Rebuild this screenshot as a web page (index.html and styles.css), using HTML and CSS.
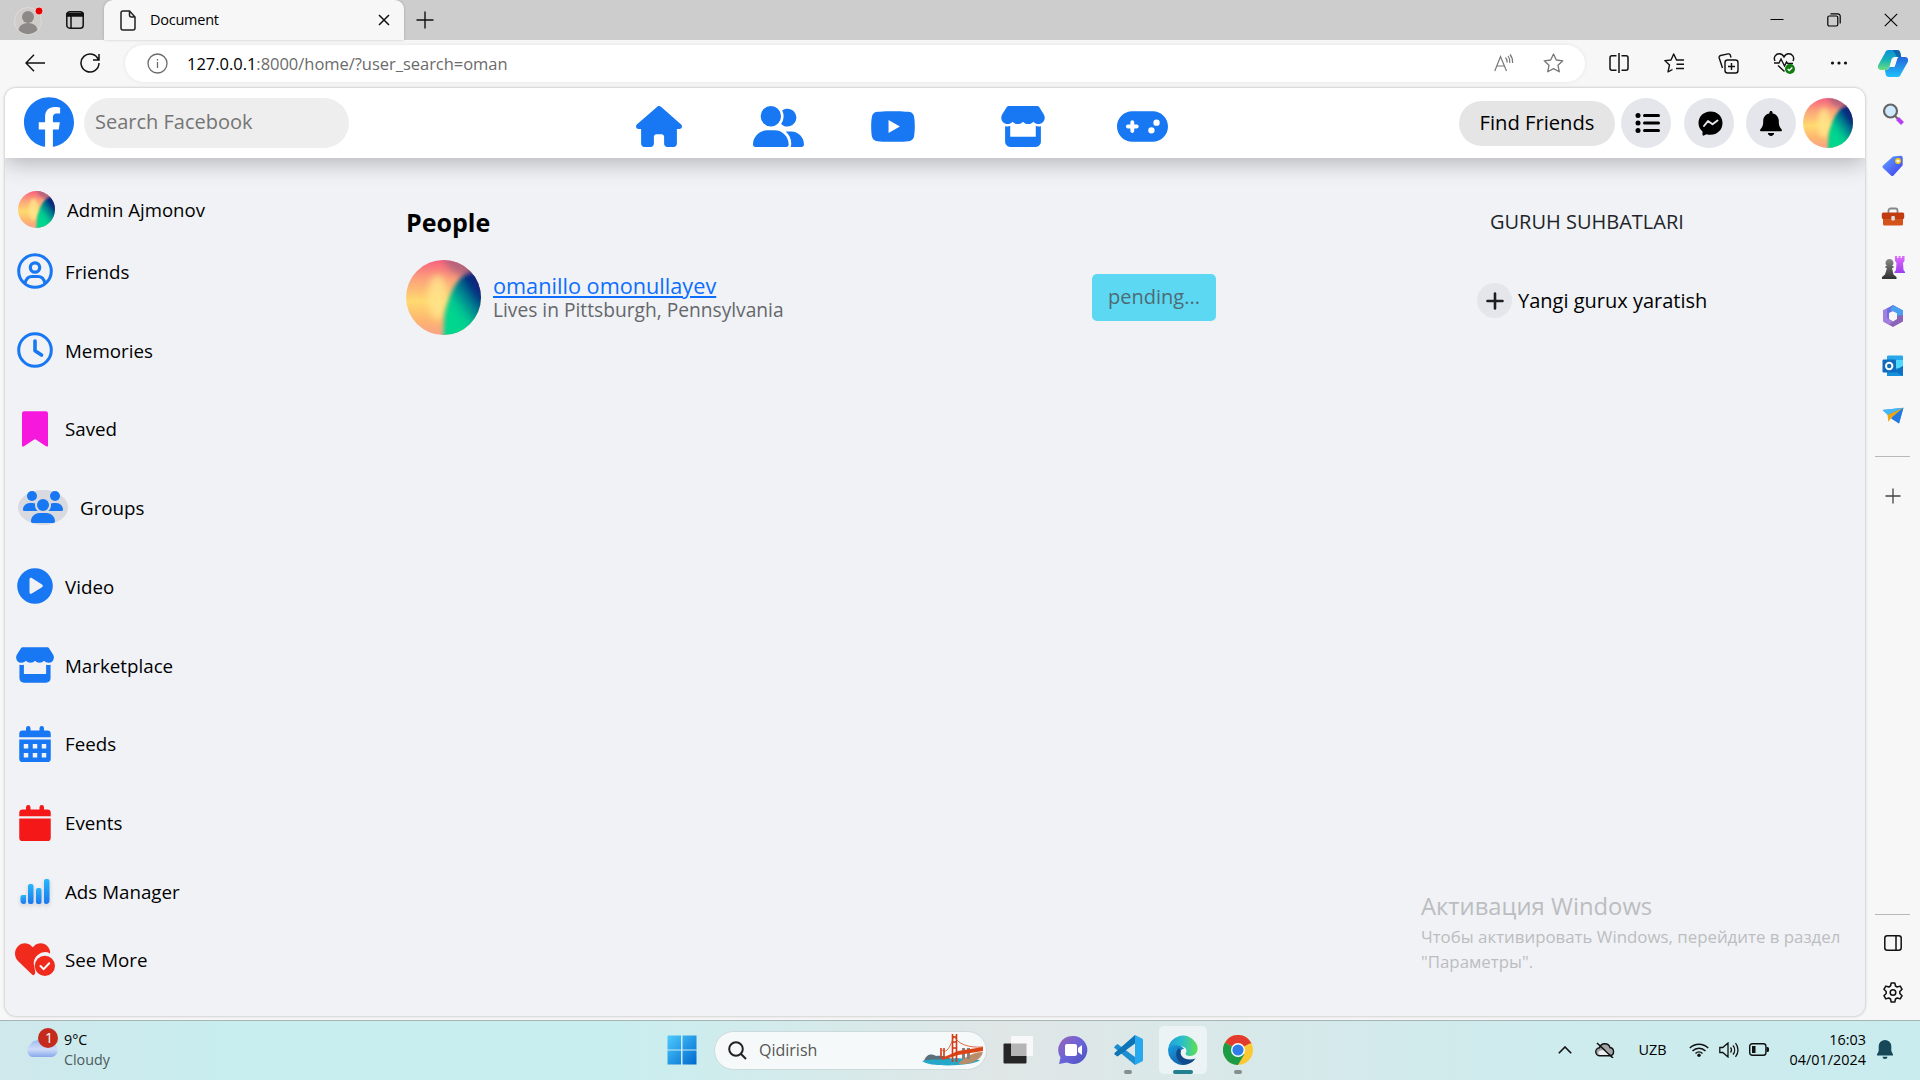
FILE: index.html
```html
<!DOCTYPE html>
<html lang="uz">
<head>
<meta charset="utf-8">
<title>Document</title>
<link rel="stylesheet" href="styles.css">
</head>
<body>
<svg class="defs" aria-hidden="true">
  <defs>
    <linearGradient id="warm" x1="0" y1="0" x2="0" y2="1"><stop offset="0" stop-color="#f8617f"/><stop offset=".25" stop-color="#fba17a"/><stop offset=".55" stop-color="#ffda70"/><stop offset=".8" stop-color="#fdb670"/><stop offset="1" stop-color="#f9a286"/></linearGradient>
    <linearGradient id="green" gradientUnits="userSpaceOnUse" x1="60" y1="70" x2="98" y2="42"><stop offset="0" stop-color="#00d68e"/><stop offset=".25" stop-color="#00c690"/><stop offset=".6" stop-color="#037f90"/><stop offset="1" stop-color="#06267e"/></linearGradient>
    <linearGradient id="bars" x1="0" y1="0" x2="0" y2="1"><stop offset="0" stop-color="#27b6fb"/><stop offset="1" stop-color="#1877f2"/></linearGradient>
    <linearGradient id="win" x1="0" y1="0" x2="1" y2="1"><stop offset="0" stop-color="#4ccbfd"/><stop offset="1" stop-color="#0068cf"/></linearGradient>
    <linearGradient id="edgeTop" x1="0" y1="0" x2="1" y2="0"><stop offset="0" stop-color="#1ba0de"/><stop offset=".5" stop-color="#2bc0c8"/><stop offset="1" stop-color="#62df4e"/></linearGradient>
    <linearGradient id="edgeLow" x1="0" y1="0" x2="1" y2="1"><stop offset="0" stop-color="#1b9de2"/><stop offset="1" stop-color="#0c4a92"/></linearGradient>
    <linearGradient id="chat" x1="0" y1="0" x2="1" y2="1"><stop offset="0" stop-color="#9a63b8"/><stop offset=".5" stop-color="#6a64d8"/><stop offset="1" stop-color="#4b50c0"/></linearGradient>
    <linearGradient id="copA" x1="0" y1="0" x2="0" y2="1"><stop offset="0" stop-color="#0c8fd8"/><stop offset=".5" stop-color="#16b3b8"/><stop offset="1" stop-color="#6ddf7c"/></linearGradient>
    <linearGradient id="copB" x1="0" y1="0" x2="0" y2="1"><stop offset="0" stop-color="#2464dc"/><stop offset="1" stop-color="#1fc0fa"/></linearGradient>
    <linearGradient id="violet" x1="0" y1="0" x2="0" y2="1"><stop offset="0" stop-color="#e36cff"/><stop offset="1" stop-color="#9a3cf0"/></linearGradient>
    <linearGradient id="grey" x1="0" y1="0" x2="0" y2="1"><stop offset="0" stop-color="#8a8a8a"/><stop offset="1" stop-color="#303030"/></linearGradient>
    <linearGradient id="tag" x1="0" y1="0" x2="1" y2="1"><stop offset="0" stop-color="#62a8ff"/><stop offset="1" stop-color="#4038f0"/></linearGradient>
    <linearGradient id="cloud" x1="0" y1="0" x2="0" y2="1"><stop offset="0" stop-color="#8fb0ec"/><stop offset=".6" stop-color="#cfdcfa"/><stop offset="1" stop-color="#86a8ea"/></linearGradient>
    <filter id="soft" x="-30%" y="-30%" width="160%" height="160%"><feGaussianBlur stdDeviation="5"/></filter>
    <filter id="edge" x="-30%" y="-30%" width="160%" height="160%"><feGaussianBlur stdDeviation="2.800"/></filter>
    <clipPath id="round"><circle cx="50" cy="50" r="50"/></clipPath>
    <symbol id="avatar" viewBox="0 0 100 100">
      <g clip-path="url(#round)">
        <rect width="100" height="100" fill="url(#warm)"/>
        <ellipse cx="42" cy="50" rx="13" ry="30" fill="#ffe58c" opacity=".8" filter="url(#soft)"/>
        <path d="M46-10 110-10 110 40 74 22 58 12z" fill="#a0607c" opacity=".75" filter="url(#soft)"/>
        <path d="M78 20C68 26 60 42 56 56C51 68 50 82 50 110L115 110 115 10z" fill="url(#green)" filter="url(#edge)"/>
        <path d="M84 10 120 20 120 55 94 44z" fill="#1e2c7e" opacity=".8" filter="url(#soft)"/>
      </g>
    </symbol>
    <symbol id="store" viewBox="0 0 576 512"><path d="M547.6 103.8L490.3 13.1C485.2 5 476.1 0 466.4 0H109.6C99.9 0 90.8 5 85.7 13.1L28.3 103.8c-29.6 46.8-3.4 111.9 51.9 119.4c4 .5 8.1 .8 12.1 .8c26.1 0 49.3-11.4 65.2-29c15.9 17.6 39.1 29 65.2 29c26.1 0 49.3-11.4 65.2-29c15.9 17.6 39.1 29 65.2 29c26.2 0 49.3-11.4 65.2-29c16 17.6 39.1 29 65.2 29c4.1 0 8.1-.3 12.1-.8c55.5-7.4 81.8-72.5 52.1-119.4zM499.7 254.9l-.1 0c-5.3 .7-10.7 1.1-16.2 1.1c-12.4 0-24.3-1.9-35.4-5.3V384H128V250.6c-11.2 3.5-23.2 5.4-35.6 5.4c-5.5 0-11-.4-16.3-1.1l-.1 0c-4.1-.6-8.1-1.3-12-2.3V384v64c0 35.3 28.7 64 64 64H448c35.3 0 64-28.7 64-64V384 252.6c-4 1-8 1.8-12.3 2.3z"/></symbol>
    <symbol id="bell" viewBox="0 0 448 512"><path d="M224 0c-17.7 0-32 14.3-32 32V49.9C119.5 61.4 64 124.2 64 200v33.4c0 45.4-15.5 89.5-43.8 124.9L5.3 377c-5.8 7.2-6.9 17.1-2.9 25.4S14.8 416 24 416H424c9.2 0 17.6-5.3 21.6-13.6s2.9-18.2-2.9-25.4l-14.9-18.6C399.5 322.9 384 278.8 384 233.4V200c0-75.8-55.5-138.6-128-150.1V32c0-17.7-14.3-32-32-32zM288 448H160c0 17 6.7 33.3 18.7 45.3s28.3 18.7 45.3 18.7s33.3-6.7 45.3-18.7s18.7-28.3 18.7-45.3z"/></symbol>
  </defs>
</svg>

<header class="tabbar">
  <svg class="profile" width="30" height="30" viewBox="0 0 30 30"><circle cx="14" cy="16" r="13.500" fill="#cfcdca" stroke="#dedcda"/><circle cx="14" cy="12" r="6" fill="#8c8986"/><path d="M4.500 25a9.500 7 0 0 1 19 0a13 13 0 0 1-19 0z" fill="#8c8986"/><circle cx="25" cy="6" r="4" fill="#e60000" stroke="#eee" stroke-width=".8"/></svg>
  <svg class="workspace" width="20" height="20" viewBox="0 0 20 20" fill="none" stroke="#111" stroke-width="1.500"><rect x="1.800" y="1.800" width="16.400" height="16.400" rx="3"/><path d="M2 3.500h16v2.500H2z" fill="#111"/><path d="M6 6v12"/></svg>
  <div class="tab">
    <svg width="16" height="21" viewBox="0 0 16 21" fill="none" stroke="#222" stroke-width="1.500"><path d="M1 3a2 2 0 0 1 2-2h6.500L15 7v11a2 2 0 0 1-2 2H3a2 2 0 0 1-2-2zM9.500 1v4a2 2 0 0 0 2 2H15"/></svg>
    <span class="tab-title">Document</span>
    <svg width="12" height="12" viewBox="0 0 12 12" stroke="#111" stroke-width="1.500"><path d="M1 1l10 10M11 1L1 11"/></svg>
  </div>
  <svg class="newtab" width="18" height="18" viewBox="0 0 18 18" stroke="#111" stroke-width="1.400"><path d="M9 .5v17M.5 9h17"/></svg>
  <div class="winctl">
    <svg width="14" height="14" viewBox="0 0 14 14" stroke="#000"><path d="M.5 6.500h13"/></svg>
    <svg width="14" height="14" viewBox="0 0 14 14" fill="none" stroke="#000" stroke-width="1.200"><rect x=".8" y="3" width="10" height="10" rx="1.500"/><path d="M3.500.8h7.200a2.500 2.500 0 0 1 2.500 2.500v7.200"/></svg>
    <svg width="14" height="14" viewBox="0 0 14 14" stroke="#000" stroke-width="1.100"><path d="M.8.8l12.400 12.400M13.200.8L.8 13.200"/></svg>
  </div>
</header>

<div class="toolbar">
  <svg class="back" width="20" height="18" viewBox="0 0 20 18" fill="none" stroke="#111" stroke-width="1.400"><path d="M9 .8L1 9l8 8.200M1 9h19"/></svg>
  <svg class="reload" width="20" height="20" viewBox="0 0 20 20" fill="none" stroke="#111" stroke-width="1.500"><path d="M18.500 7A9 9 0 1 0 19 10M19 1v6h-6"/></svg>
  <div class="address">
    <svg width="21" height="21" viewBox="0 0 21 21" fill="none" stroke="#6b6b6b" stroke-width="1.300"><circle cx="10.500" cy="10.500" r="9.500"/><path d="M10.500 9v6M10.500 6v1.600"/></svg>
    <span class="url"><b>127.0.0.1</b>:8000/home/?user_search=oman</span>
    <svg class="read" width="20" height="18" viewBox="0 0 20 18" fill="none" stroke="#777" stroke-width="1.200"><path d="M.8 17L6.500 2.500 12.500 17M2.800 12h7.600M11.500 3.500a6 6 0 0 1 1.500 5M14 2a9 9 0 0 1 1.800 7M16 .5a12 12 0 0 1 2.600 8.500"/></svg>
    <svg class="star" width="21" height="20" viewBox="0 0 21 20" fill="none" stroke="#777" stroke-width="1.300" stroke-linejoin="round"><path d="M10.500 1l2.800 6 6.500.8-4.800 4.500 1.300 6.500-5.800-3.200-5.800 3.200L6 12.300 1.200 7.800l6.500-.8z"/></svg>
  </div>
  <div class="tools">
    <svg width="20" height="20" viewBox="0 0 20 20" fill="none" stroke="#111" stroke-width="1.500"><path d="M7.500 2.800H3a2 2 0 0 0-2 2v10.500a2 2 0 0 0 2 2h4.500M12.500 2.800H17a2 2 0 0 1 2 2v10.500a2 2 0 0 1-2 2h-4.500M10 0v20"/></svg>
    <svg width="20" height="20" viewBox="0 0 20 20" fill="none" stroke="#111" stroke-width="1.400" stroke-linejoin="round"><path d="M12.500 7l-2.800-6L7 7 .8 7.600 5.500 12 4 18.800l4.500-2.300M12 7h8M12.500 11.300H20M12 15.500h8"/></svg>
    <svg width="21" height="21" viewBox="0 0 21 21" fill="none" stroke="#111" stroke-width="1.400"><rect x="7" y="7" width="13" height="13" rx="2.500"/><path d="M13.500 10v7M10 13.500h7M4.500 15L1.200 5A2 2 0 0 1 2.600 2.500L10 .9a2 2 0 0 1 2.400 1.600L13 4.500"/></svg>
    <svg width="22" height="22" viewBox="0 0 22 22" fill="none" stroke="#111" stroke-width="1.400"><path d="M2 9C0 5 3 1.500 6.500 1.700 9 1.800 10.500 4 11 5c.5-1 2-3.200 4.500-3.300C19 1.500 22 5 20 9M1 11h5l2-4 3.500 7L13.500 10l1 1.500H20M5 13.500l6.500 6"/><circle cx="17" cy="17" r="5" fill="#107c10" stroke="none"/><path d="M14.700 17l1.600 1.600 3-3" stroke="#fff"/></svg>
    <svg width="18" height="6" viewBox="0 0 18 6" fill="#111"><circle cx="2.500" cy="3" r="1.600"/><circle cx="9" cy="3" r="1.600"/><circle cx="15.500" cy="3" r="1.600"/></svg>
  </div>
  <svg class="copilot" width="30" height="27" viewBox="0 0 30 27"><path d="M7 3a4 4 0 0 1 4-3h8c2 0 3 1 3.400 3l.8 4H17c-2 0-3 1-3.600 3l-1.800 7c-.6 2-2 3-4 3H3c-2.500 0-3.500-2-3-4.500z" fill="url(#copA)"/><path d="M23 24a4 4 0 0 1-4 3h-8c-2 0-3-1-3.400-3L7 20c3 0 4-1 4.600-3H14c2 0 3-1 3.500-3l1.700-5c.6-2 2-2.500 4-2H27c2.500 0 3.500 2 3 4.500z" fill="url(#copB)"/><path d="M15 0h4c2 0 3 1 3.400 3l.8 4H19z" fill="#124f9c" opacity=".7"/><path d="M13.800 9.500h5l-2.300 7.500h-5z" fill="#f7f7f7"/></svg>
</div>

<div class="workarea">
  <div class="page">
    <nav class="navbar">
      <svg class="fb" width="50" height="50" viewBox="0 0 24 24" fill="#1877f2"><path d="M24 12.073c0-6.627-5.373-12-12-12s-12 5.373-12 12c0 5.990 4.388 10.954 10.125 11.854v-8.385H7.078v-3.470h3.047V9.430c0-3.007 1.792-4.669 4.533-4.669 1.312 0 2.686.235 2.686.235v2.953H15.830c-1.491 0-1.956.925-1.956 1.874v2.250h3.328l-.532 3.470h-2.796v8.385C19.612 23.027 24 18.062 24 12.073z"/></svg>
      <div class="search">Search Facebook</div>
      <div class="nav-icons">
        <svg width="46" height="41" viewBox="0 0 576 512"><path d="M575.8 255.500c0 18-15 32.100-32 32.100h-32l.7 160.200c0 2.700-.2 5.400-.5 8.100V472c0 22.100-17.900 40-40 40H392c-22.100 0-40-17.900-40-40V384c0-17.700-14.300-32-32-32H256c-17.700 0-32 14.300-32 32v88c0 22.100-17.900 40-40 40H104c-22.100 0-40-17.900-40-40V287.600H32c-18 0-32-14-32-32.100c0-9 3-17 10-24L266.400 8c7-7 15-8 22-8s15 2 21 7L564.800 231.500c8 7 12 15 11 24z"/></svg>
        <svg width="51" height="41" viewBox="0 0 640 512"><path d="M96 128a128 128 0 1 1 256 0A128 128 0 1 1 96 128zM0 482.300C0 383.800 79.800 304 178.300 304h91.400C368.200 304 448 383.800 448 482.300c0 16.400-13.300 29.700-29.700 29.700H29.700C13.300 512 0 498.700 0 482.300zM609.300 512H471.400c5.400-9.400 8.600-20.300 8.600-32v-8c0-60.700-27.100-115.200-69.800-151.800c2.400-.1 4.700-.2 7.100-.2h61.400C567.800 320 640 392.200 640 481.300c0 17-13.800 30.700-30.700 30.700zM432 256c-31 0-59-12.600-79.300-32.900C372.400 196.500 384 163.600 384 128c0-26.800-6.600-52.100-18.300-74.300C384.300 40.100 407.200 32 432 32c61.900 0 112 50.100 112 112s-50.100 112-112 112z"/></svg>
        <svg class="watch" width="46" height="41" viewBox="0 0 576 512"><path d="M549.655 124.083c-6.281-23.650-24.787-42.276-48.284-48.597C458.781 64 288 64 288 64S117.220 64 74.629 75.486c-23.497 6.322-42.003 24.947-48.284 48.597-11.412 42.867-11.412 132.305-11.412 132.305s0 89.438 11.412 132.305c6.281 23.650 24.787 41.500 48.284 47.821C117.220 448 288 448 288 448s170.780 0 213.371-11.486c23.497-6.321 42.003-24.171 48.284-47.821 11.412-42.867 11.412-132.305 11.412-132.305s0-89.438-11.412-132.305zm-317.510 213.508V175.185l142.739 81.205-142.739 81.201z"/></svg>
        <svg class="market" width="46" height="41"><use href="#store"/></svg>
        <svg width="51" height="41" viewBox="0 0 640 512"><path d="M192 64C86 64 0 150 0 256S86 448 192 448H448c106 0 192-86 192-192s-86-192-192-192H192zM496 168a40 40 0 1 1 0 80 40 40 0 1 1 0-80zM392 304a40 40 0 1 1 80 0 40 40 0 1 1 -80 0zM168 200c0-13.300 10.700-24 24-24s24 10.700 24 24v32h32c13.300 0 24 10.700 24 24s-10.700 24-24 24H216v32c0 13.300-10.700 24-24 24s-24-10.700-24-24V280H136c-13.300 0-24-10.700-24-24s10.700-24 24-24h32V200z"/></svg>
      </div>
      <div class="nav-actions">
        <div class="find">Find Friends</div>
        <div class="round list"><svg width="26" height="22" viewBox="0 0 26 22"><g stroke="#000" stroke-width="3" stroke-linecap="round"><path d="M9.500 3.500h14M9.500 11h14M9.500 18.500h14"/></g><circle cx="3" cy="3.500" r="2.500"/><circle cx="3" cy="11" r="2.500"/><circle cx="3" cy="18.500" r="2.500"/></svg></div>
        <div class="round messenger"><svg width="25" height="25" viewBox="0 0 25 25"><path d="M12.500.5C5.500.5.500 5.500.500 12c0 3.500 1.500 6.500 4 8.600v3.200c0 .8.700 1 1.200.8l3-1.300c1.200.4 2.500.5 3.800.5 7 0 12-5.200 12-11.800S19.500.5 12.500.5z"/><path d="M6 15l4-5 4.500 3.200 5-3.700" fill="none" stroke="#e4e6eb" stroke-width="2" stroke-linejoin="round" stroke-linecap="round"/></svg></div>
        <div class="round bell"><svg width="22" height="25"><use href="#bell"/></svg></div>
        <svg class="me" width="50" height="50"><use href="#avatar"/></svg>
      </div>
    </nav>
    <div class="content">
      <aside class="menu">
        <div class="item account"><span class="ico"><svg width="37" height="37"><use href="#avatar"/></svg></span>Admin Ajmonov</div>
        <div class="item"><span class="ico"><svg width="36" height="36" viewBox="0 0 36 36" fill="none" stroke="#1877f2" stroke-width="3"><circle cx="18" cy="18" r="16.300"/><circle cx="18" cy="14.500" r="4.700" stroke-width="3.200"/><path d="M8 30.500c1-5 4-7 7-7h6c3 0 6 2 7 7"/></svg></span>Friends</div>
        <div class="item"><span class="ico"><svg width="36" height="36" viewBox="0 0 36 36" fill="none" stroke="#1877f2" stroke-width="3"><circle cx="18" cy="18" r="16.300"/><path d="M18 9v9.800l6.500 4.200" stroke-width="3.600" stroke-linecap="round" stroke-linejoin="round"/></svg></span>Memories</div>
        <div class="item"><span class="ico"><svg width="26" height="36" viewBox="0 0 26 36" fill="#f618dc"><path d="M2.500.3h21A2.300 2.300 0 0 1 26 2.600V34.500c0 1.200-1 1.500-2 .8L13 28 2 35.300c-1 .7-2 .4-2-.8V2.600A2.300 2.300 0 0 1 2.500.3z"/></svg></span>Saved</div>
        <div class="item groups"><span class="oval"><svg width="40" height="32" viewBox="0 0 640 512" fill="#1877f2"><circle cx="144" cy="80" r="80"/><circle cx="512" cy="80" r="80"/><circle cx="320" cy="224" r="96"/><path d="M0 298.700C0 239.800 47.800 192 106.700 192h42.700c15.900 0 31 3.500 44.600 9.700-1.300 7.200-1.900 14.700-1.900 22.300 0 38.200 16.800 72.500 43.300 96H21.300C9.600 320 0 310.400 0 298.700zM405.300 320c26.600-23.500 43.300-57.800 43.300-96 0-7.600-.7-15-1.900-22.300 13.600-6.300 28.700-9.700 44.600-9.700h42.700C592.200 192 640 239.800 640 298.700c0 11.800-9.600 21.300-21.300 21.300zM128 485.300C128 411.700 187.700 352 261.300 352h117.400C452.300 352 512 411.700 512 485.300c0 14.700-11.900 26.700-26.700 26.700H154.700c-14.700 0-26.700-11.900-26.700-26.700z"/></svg></span>Groups</div>
        <div class="item"><span class="ico"><svg width="36" height="36" viewBox="0 0 36 36"><circle cx="18" cy="18" r="17.800" fill="#1877f2"/><path d="M12.500 11.500c0-1.400 1.200-2 2.300-1.400L25 16.500c1.200.8 1.200 2 0 2.700l-10.200 6.300c-1.100.7-2.300 0-2.300-1.300z" fill="#f0f2f6"/></svg></span>Video</div>
        <div class="item"><span class="ico"><svg width="40" height="36" fill="#1877f2"><use href="#store"/></svg></span>Marketplace</div>
        <div class="item"><span class="ico"><svg width="32" height="36" viewBox="0 0 448 512" fill="#1877f2"><path fill-rule="evenodd" d="M96 32a32 32 0 0 1 64 0v32h128V32a32 32 0 0 1 64 0v32h48a48 48 0 0 1 48 48v48H0v-48a48 48 0 0 1 48-48h48zM0 192h448v272a48 48 0 0 1-48 48H48a48 48 0 0 1-48-48zM64 256v64h64v-64zM192 256v64h64v-64zM320 256v64h64v-64zM64 384v64h64v-64zM192 384v64h64v-64zM320 384v64h64v-64z"/></svg></span>Feeds</div>
        <div class="item"><span class="ico"><svg width="32" height="36" viewBox="0 0 448 512" fill="#f51818"><path d="M96 32a32 32 0 0 1 64 0v32h128V32a32 32 0 0 1 64 0v32h48a48 48 0 0 1 48 48v48H0v-48a48 48 0 0 1 48-48h48zM0 192h448v272a48 48 0 0 1-48 48H48a48 48 0 0 1-48-48z"/></svg></span>Events</div>
        <div class="item"><span class="ico"><svg class="ads" width="30" height="25" viewBox="0 0 30 25" fill="url(#bars)"><path d="M.5 18a2 2 0 0 1 2-2H6v7a2 2 0 0 1-2 2C1.500 25 .5 23.500.5 21z"/><rect x="8" y="5" width="5.500" height="20" rx="2"/><rect x="16" y="9" width="5.500" height="16" rx="2"/><path d="M24 2a2 2 0 0 1 2-2h1.500a2 2 0 0 1 2 2v19c0 2.500-1 4-3.500 4a2 2 0 0 1-2-2z"/></svg></span>Ads Manager</div>
        <div class="item"><span class="ico"><svg width="40" height="33" viewBox="0 0 640 528" fill="#f02a1d"><path d="M305 512c-10 4-20 2-28-5L47 288C-20 220-15 100 60 40c60-50 150-45 205 10l19 19 19-19c55-55 145-60 205-10 40 35 56 80 54 127a180 180 0 0 0-250 220c5 60 25 90-7 125z" /><circle cx="478" cy="365" r="162"/><path d="M408 368l50 50 90-94" fill="none" stroke="#fff" stroke-width="32" stroke-linecap="round"/></svg></span>See More</div>
      </aside>
      <main class="people">
        <h1>People</h1>
        <div class="person">
          <svg width="75" height="75"><use href="#avatar"/></svg>
          <div class="who"><a>omanillo omonullayev</a><p>Lives in Pittsburgh, Pennsylvania</p></div>
          <div class="pending">pending...</div>
        </div>
      </main>
      <aside class="chats">
        <h2>GURUH SUHBATLARI</h2>
        <div class="create"><span class="plus"><svg width="18" height="18" viewBox="0 0 18 18" stroke="#1c1e21" stroke-width="2.600" stroke-linecap="round"><path d="M9 1.500v15M1.500 9h15"/></svg></span>Yangi gurux yaratish</div>
      </aside>
      <div class="activate"><strong>Активация Windows</strong><p>Чтобы активировать Windows, перейдите в раздел<br>"Параметры".</p></div>
    </div>
  </div>
  <aside class="rail">
    <svg width="22" height="22" viewBox="0 0 22 22"><path d="M13 13l3 3" stroke="#666" stroke-width="2"/><path d="M15.500 15.500l5 5" stroke="#b53ef5" stroke-width="4"/><circle cx="8.500" cy="8" r="6.500" fill="#cfeaff" stroke="#666" stroke-width="2.200"/></svg>
    <svg width="22" height="22" viewBox="0 0 22 22"><path d="M11 1.500L18.500.8a2 2 0 0 1 2.200 2v7.500L11.500 20.500a2 2 0 0 1-2.500 0L1 13a2 2 0 0 1 0-2.500z" fill="url(#tag)"/><circle cx="16" cy="6" r="2.300" fill="#fff" stroke="#f9c800" stroke-width="1.400"/></svg>
    <svg width="24" height="20" viewBox="0 0 24 20"><path d="M7.500 6V3.500a2 2 0 0 1 2-2h5a2 2 0 0 1 2 2V6" fill="none" stroke="#888" stroke-width="1.800"/><rect x="2" y="9" width="20" height="9.500" rx="1.500" fill="#d4531b"/><rect x=".8" y="5.500" width="22.400" height="6.500" rx="1.500" fill="#c13c10"/><rect x="10.300" y="9" width="3.600" height="4.500" rx="1" fill="#ddd"/></svg>
    <svg width="24" height="24" viewBox="0 0 24 24"><path d="M14 1h2v2h1.500V1h2v2H21V1h2.500v5l-1.500 2 .5 7 1.500 2v1H13.500v-1l1.500-2 .5-7L14 6z" fill="url(#violet)"/><path d="M4.500 11h1.500a4 4 0 1 1 5 0h1.500v2H11l1.500 6.500L15.500 22v2H1v-2l3-2.500L6 13H4.500z" fill="url(#grey)"/></svg>
    <svg width="22" height="22" viewBox="0 0 22 22"><path d="M11 0l10 5.500v5L15 8 11 6 7 8v6L1 16V5.500z" fill="#6d6ee0"/><path d="M11 0l10 5.500V12l-6-1V8L8 5z" fill="#4b9ff0"/><path d="M1 16.500L7 14l4 2.500 4-2.500v-3l6-1v6.500L11 22z" fill="#8b63b8"/><path d="M1 5.500l4-2v9l2 2 4 2-4 3-6-3.500z" fill="#a380e0"/><path d="M11 7l3.800 2.200v4L11 15.400l-3.800-2.200v-4z" fill="#f7f7f7"/></svg>
    <svg width="22" height="22" viewBox="0 0 22 22"><rect x="5" y=".5" width="16" height="15" rx="1" fill="#28a8ea"/><path d="M12 5h9v8h-9z" fill="#50d9ff"/><path d="M5 21h15a1 1 0 0 0 1-1v-9l-9 6-7-3z" fill="#1490df"/><path d="M12 16l9 5V11z" fill="#0f6fc4"/><rect x=".5" y="4.500" width="13.500" height="13" rx="1.200" fill="#0f6cbd"/><circle cx="7.200" cy="11" r="3.200" fill="none" stroke="#fff" stroke-width="2"/></svg>
    <svg width="22" height="18" viewBox="0 0 22 18"><path d="M.5 3L21.500.8 17 16.500l-5-4z" fill="#2e8fee"/><path d="M.5 3L21.500.8 5.500 8z" fill="#45b8f5"/><path d="M5.500 8L21 1 9 11l-2.500 4z" fill="#f2a40c"/><path d="M9 11.500L21.300 1 17 16.500z" fill="#2379e0"/></svg>
    <hr>
    <svg class="add" width="16" height="16" viewBox="0 0 16 16" stroke="#444" stroke-width="1.300"><path d="M8 .5v15M.5 8h15"/></svg>
    <hr>
    <svg width="18" height="16" viewBox="0 0 18 16" fill="none" stroke="#111" stroke-width="1.500"><rect x=".8" y=".8" width="16.400" height="14.400" rx="2.500"/><path d="M12 1v14"/></svg>
    <svg width="22" height="22" viewBox="0 0 22 22" fill="none" stroke="#111" stroke-width="1.500" stroke-linejoin="round"><path d="M9.200 1h3.600l.7 3 1.700 1 3-.9 1.900 3.200-2.300 2.200v2l2.300 2.200-1.900 3.200-3-.9-1.700 1-.7 3H9.200l-.7-3-1.700-1-3 .9-1.900-3.200 2.300-2.200v-2L1.900 7.300l1.900-3.200 3 .9 1.700-1z"/><circle cx="11" cy="10.500" r="2.800"/></svg>
  </aside>
</div>

<footer class="taskbar">
  <div class="weather">
    <svg width="36" height="32" viewBox="0 0 36 32"><path d="M8 30a7 7 0 0 1-1.500-12.500 7 7 0 0 1 6-4A9 9 0 0 1 28 17a6.500 6.500 0 0 1-2 13z" fill="url(#cloud)"/><circle cx="24" cy="11" r="10" fill="#c42b1c"/></svg>
    <span class="badge">1</span>
    <div class="forecast"><span>9°C</span><em>Cloudy</em></div>
  </div>
  <div class="apps">
    <div class="cell start"><svg width="30" height="30" viewBox="0 0 30 30" fill="url(#win)"><path d="M1 .5h13v14H.5V1zM15.500.5h14v14h-14zM.5 15.500h13.500v14H.5zM15.500 15.500h14v14h-14z"/></svg></div>
    <div class="find-box">
      <svg width="19" height="19" viewBox="0 0 19 19" fill="none" stroke="#222" stroke-width="2"><circle cx="8" cy="8" r="6.800"/><path d="M12.800 12.800l5.200 5.200"/></svg>
      <span>Qidirish</span>
      <svg class="bridge" width="62" height="32" viewBox="0 0 62 32"><path d="M2 27c3-8 8-7 12-5 8-1 14 2 20 5z" fill="#5c6f7c"/><path d="M0 27c10-3 20 0 34-3l24 2c-6 6-50 8-58 1z" fill="#25a7c9"/><path d="M36 30c6-6 14-12 25-12-2 8-12 13-25 12z" fill="#b98d68"/><path d="M40 14h3v11h-3zM45 14h3v11h-3z" fill="#8a8078"/><path d="M20 24 36 17 61 13v4L36 21 20 26z" fill="#dc4418"/><path d="M19 24V14M22 24V14M30.500 28V0M34.500 28V0M30 3h5M30 8h5M30 14h5" stroke="#d23b14" stroke-width="1.600"/><path d="M20 16c4 4 8-2 12-14 4 8 14 12 29 11" fill="none" stroke="#dc4418" stroke-width=".8"/></svg>
    </div>
    <div class="cell"><svg width="30" height="28" viewBox="0 0 30 28"><rect x=".5" y="7.500" width="23" height="20" rx="1" fill="#262626"/><rect x="8" y="0" width="22" height="20" rx="1" fill="#f8f8f8"/><path d="M8 7.500h15.500V20H8z" fill="#b5b5b5"/></svg></div>
    <div class="cell"><svg width="30" height="30" viewBox="0 0 30 30"><path d="M15 1a14 14 0 1 1-6 26.500L1 29l1.500-6.500A14 14 0 0 1 15 1z" fill="url(#chat)"/><rect x="7" y="9" width="12" height="12" rx="2" fill="#fff"/><path d="M20 13l4-3v10l-4-3z" fill="#fff"/></svg></div>
    <div class="cell on"><svg width="30" height="30" viewBox="0 0 30 30"><path d="M2.500 10.500l2-1.500L22 22v8L1 12.500z" fill="#1d8ed0"/><path d="M22 0v8.500L4.500 21.500l-3-2v-1.500z" fill="#0e74b8"/><path d="M22 0l7 3.500a1.500 1.500 0 0 1 1 1.500v20a1.500 1.500 0 0 1-1 1.500L22 30z" fill="#28a8ee"/></svg></div>
    <div class="cell active"><svg width="30" height="30" viewBox="0 0 30 30"><path d="M0 15A15 15 0 0 1 28 8c4 7 0 13-6 13-4 0-5-1.500-4-3.500 1.500-3-1-6-5-6C6 11.500 2 15 0 15z" fill="url(#edgeTop)"/><path d="M0 15c1-4 7-6 12-4 2.500 1 3.500 2 4 3-5 0-6 7-2 11 3 3 8 3 13-1A15 15 0 0 1 0 15z" fill="url(#edgeLow)"/><path d="M11 13c-5 4-3 13 4 16 5 1 10-2 12.500-5.500C18 27 11 21 13 16z" fill="#114a8b"/></svg></div>
    <div class="cell on"><svg width="30" height="30" viewBox="0 0 30 30"><circle cx="15" cy="15" r="15" fill="#fcc934"/><path d="M15 15L2 7.500A15 15 0 0 1 28 7.500z" fill="#e33b2e"/><path d="M15 15L2 7.500A15 15 0 0 0 15 30L21.500 19z" fill="#1e9b47"/><path d="M8 7.500h20l.3 1H15z" fill="#e33b2e"/><circle cx="15" cy="15" r="7" fill="#fff"/><circle cx="15" cy="15" r="5.600" fill="#2f7de9"/></svg></div>
  </div>
  <div class="tray">
    <svg width="14" height="8" viewBox="0 0 14 8" fill="none" stroke="#111" stroke-width="1.600"><path d="M.8 7.200L7 1l6.200 6.200"/></svg>
    <svg width="20" height="16" viewBox="0 0 20 16"><path d="M5 13.800a4 4 0 0 1-.5-8A5.500 5.500 0 0 1 15 5.500a4.200 4.200 0 0 1 0 8.300z" fill="#a0a4a5" stroke="#111" stroke-width="1.400"/><path d="M5 13c-3-2-2-4 1-4.500 4-2 7 0 9 4.500z" fill="#eee"/><path d="M2 1l16 15" stroke="#111" stroke-width="1.600"/></svg>
    <span class="lang">UZB</span>
    <svg width="20" height="15" viewBox="0 0 20 15" fill="none" stroke="#111" stroke-width="1.400"><path d="M.8 6a13 13 0 0 1 18.400 0M3.500 9a9 9 0 0 1 13 0M6.500 11.500a5 5 0 0 1 7 0"/><circle cx="10" cy="13.200" r="1.700" fill="#111" stroke="none"/></svg>
    <svg width="20" height="16" viewBox="0 0 20 16" fill="none" stroke="#111" stroke-width="1.300"><path d="M.8 5.500h3L9 1v14l-5.200-4.500h-3zM11.500 5.500a4 4 0 0 1 0 5M14 3.500a7 7 0 0 1 0 9M16.500 1.200a10.500 10.500 0 0 1 0 13.600"/></svg>
    <svg width="20" height="13" viewBox="0 0 20 13"><rect x=".7" y=".7" width="16.200" height="11.600" rx="2.500" fill="none" stroke="#111" stroke-width="1.400"/><path d="M3 3h3.500v7H3zM17.500 4h1a1.500 1.500 0 0 1 1.500 1.500v2a1.500 1.500 0 0 1-1.500 1.500h-1z" fill="#111"/></svg>
    <div class="clock"><span>16:03</span><span>04/01/2024</span></div>
    <svg width="16" height="19" viewBox="0 0 16 19" fill="#16485a"><path d="M8 0a6.300 6.300 0 0 1 6.300 6.300V11L16 14.500c.2.600 0 1-.6 1H.6c-.6 0-.8-.4-.6-1L1.700 11V6.300A6.300 6.300 0 0 1 8 0zM5.500 16.800h5a2.500 2.200 0 0 1-5 0z"/></svg>
  </div>
</footer>
</body>
</html>
```
FILE: styles.css
```css
* { box-sizing: border-box; }
body { margin: 0; width: 1920px; height: 1080px; overflow: hidden; background: #f7f7f7; font-family: "Open Sans", "Noto Sans", sans-serif; color: #000; display: flex; flex-direction: column; }
svg { display: block; flex: none; }
.defs { position: absolute; width: 0; height: 0; }
h1, h2, p { margin: 0; font-weight: 400; }

.tabbar { height: 40px; flex: none; display: flex; align-items: center; background: #cdcdcd; padding-left: 14px; }
.workspace { margin-left: 21px; }
.tab { width: 300px; height: 40px; margin-left: 19px; background: #f7f7f7; border-radius: 9px 9px 0 0; display: flex; align-items: center; padding: 0 14px 0 16px; box-shadow: 0 0 3px rgba(0,0,0,.2); }
.tab-title { flex: 1; margin-left: 14px; font-size: 14.5px; letter-spacing: -.25px; padding-bottom: 2px; }
.newtab { margin-left: 12px; }
.winctl { margin-left: auto; margin-right: 22px; display: flex; gap: 43px; }

.toolbar { height: 47px; flex: none; display: flex; align-items: center; padding: 0 0 1px; }
.back { margin-left: 25px; }
.reload { margin-left: 35px; }
.address { margin-left: 25px; width: 1460px; height: 37px; border-radius: 19px; background: #fff; box-shadow: 0 0 4px rgba(0,0,0,.08); display: flex; align-items: center; padding: 0 21px 0 22px; }
.url { flex: 1; margin-left: 19px; font-size: 16.5px; letter-spacing: -.03px; color: #6b6b6b; }
.url b { font-weight: 400; color: #000; }
.star { margin-left: 29px; }
.tools { margin-left: 6px; width: 275px; display: grid; grid-template-columns: repeat(5, 55px); align-items: center; justify-items: center; }
.copilot { margin-left: 12px; }

.workarea { flex: 1; display: flex; min-height: 0; }
.page { margin: 1px 0 4px 5px; width: 1860px; border-radius: 11px; overflow: hidden; background: #f0f2f6; box-shadow: 0 0 3px rgba(0,0,0,.3); display: flex; flex-direction: column; }
.navbar { height: 70px; flex: none; background: #fff; display: flex; align-items: center; padding-left: 19px; box-shadow: 0 4px 22px rgba(0,0,0,.28); z-index: 1; }
.fb { margin-bottom: 2px; }
.search { margin-left: 10px; width: 265px; height: 50px; border-radius: 25px; background: #eee; color: #757575; font-size: 20px; line-height: 47px; padding-left: 11px; }
.nav-icons { margin-left: 287px; padding-top: 7px; display: flex; gap: 71px; fill: #1877f2; }
.watch { margin-left: -5px; }
.market { margin-left: 13px; }
.nav-actions { margin-left: auto; margin-right: 12px; display: flex; align-items: center; }
.find { width: 156px; height: 45px; border-radius: 23px; background: #e5e5e5; font-size: 20.2px; line-height: 43px; text-align: center; }
.round { width: 50px; height: 50px; border-radius: 50%; background: #e4e6eb; display: flex; align-items: center; justify-content: center; }
.list { margin-left: 6px; padding-left: 4px; }
.messenger { margin-left: 13px; padding-left: 2px; }
.bell { margin-left: 12px; }
.me { margin-left: 7px; }

.content { flex: 1; display: flex; position: relative; }
.menu { width: 401px; padding-top: 29px; display: grid; grid-template-rows: 45px repeat(8, 78.75px) 59px 77px; align-content: start; }
.item { display: flex; align-items: center; font-size: 18.75px; padding-left: 10px; }
.item .ico { width: 40px; margin-right: 10px; display: flex; justify-content: center; }
.account { font-size: 18.6px; }
.account .ico { width: 42px; margin-right: 10px; }
.item .oval { margin: 0 12px 0 3px; width: 50px; height: 35px; border-radius: 50%; background: #d8dadf; display: flex; align-items: center; justify-content: center; }
.oval svg { margin-bottom: 2px; }
.ads { filter: drop-shadow(0 2px 2px rgba(0,0,0,.15)); }
.people { width: 810px; padding-top: 47px; }
.people h1 { font-size: 25px; line-height: 34px; font-weight: 700; }
.person { margin-top: 21px; display: flex; align-items: center; }
.who { margin-left: 12px; width: 599px; padding-bottom: 2px; }
.who a { display: block; font-size: 21.7px; line-height: 25px; color: #0d6efd; text-decoration: underline; }
.who p { font-size: 19.2px; line-height: 23px; color: #65676b; }
.pending { width: 124px; height: 47px; border-radius: 5px; background: #5cd8f3; color: #4f6b74; font-size: 20px; line-height: 46px; text-align: center; }
.chats { margin-left: 261px; padding-top: 50px; }
.chats h2 { margin-left: 13px; font-size: 20px; line-height: 27px; color: #212529; }
.create { margin-top: 48px; display: flex; align-items: center; font-size: 20px; }
.plus { width: 35px; height: 35px; margin-right: 6px; border-radius: 50%; background: #e4e6eb; display: flex; align-items: center; justify-content: center; }
/* System watermark lies over the page */
.activate { position: absolute; left: 1416px; top: 731px; color: #bcbdc0; }
.activate strong { display: block; font-weight: 400; font-size: 23.8px; line-height: 35px; white-space: nowrap; }
.activate p { font-size: 16.85px; line-height: 25px; white-space: nowrap; }

.rail { flex: 1; display: grid; justify-items: center; align-content: start; align-items: center; grid-template-rows: 54px 50px 51px 49px 50px 50px 49px 17px 77px 381px 55px 45px; }
.rail hr { width: 35px; border: 0; border-top: 1px solid #b8b8b8; margin: 0; align-self: end; }

.taskbar { height: 60px; flex: none; border-top: 1px solid #a5b4b5; display: flex; background: linear-gradient(90deg, #cfe8ec 0, #c8eeef 12%, #c9eeef 32%, #e0e6e6 52%, #cfebed 78%, #c9ecee 100%); }
.weather { width: 658px; display: flex; position: relative; padding: 6px 0 0 24px; }
/* Alert count lies over the cloud */
.badge { position: absolute; left: 39px; top: 7px; width: 20px; line-height: 20px; text-align: center; color: #fff; font-size: 14px; }
.forecast { display: flex; flex-direction: column; margin-left: 4px; font-size: 14.3px; line-height: 20px; padding-top: 3px; }
.forecast em { font-style: normal; color: #4c5a5c; }
.apps { display: flex; align-items: center; gap: 7px; padding-bottom: 1px; }
.cell { width: 48px; height: 48px; border-radius: 5px; display: flex; align-items: center; justify-content: center; position: relative; }
.cell.active { background: #ebf3f5; }
/* Running indicators under the app icons */
.cell.on::after, .cell.active::after { content: ""; position: absolute; bottom: 0; width: 8px; height: 4px; border-radius: 2px; background: #858d8f; }
.cell.active::after { width: 20px; background: #22808f; }
.find-box { width: 273px; height: 39px; margin-left: 1px; border-radius: 20px; background: #f5f9fa; border: 1px solid #ccdadb; display: flex; align-items: center; padding: 0 2px 0 13px; font-size: 16px; color: #555; }
.find-box span { flex: 1; margin-left: 12px; }
.tray { margin-left: auto; display: flex; align-items: center; margin-right: 27px; padding-bottom: 2px; font-size: 14.4px; }
.tray > svg + svg { margin-left: 10px; }
.tray > svg:nth-child(2) { margin-left: 23px; }
.lang { margin: 0 22px 0 24px; }
.clock { margin: 0 11px 0 21px; display: flex; flex-direction: column; align-items: flex-end; line-height: 20px; }
```
